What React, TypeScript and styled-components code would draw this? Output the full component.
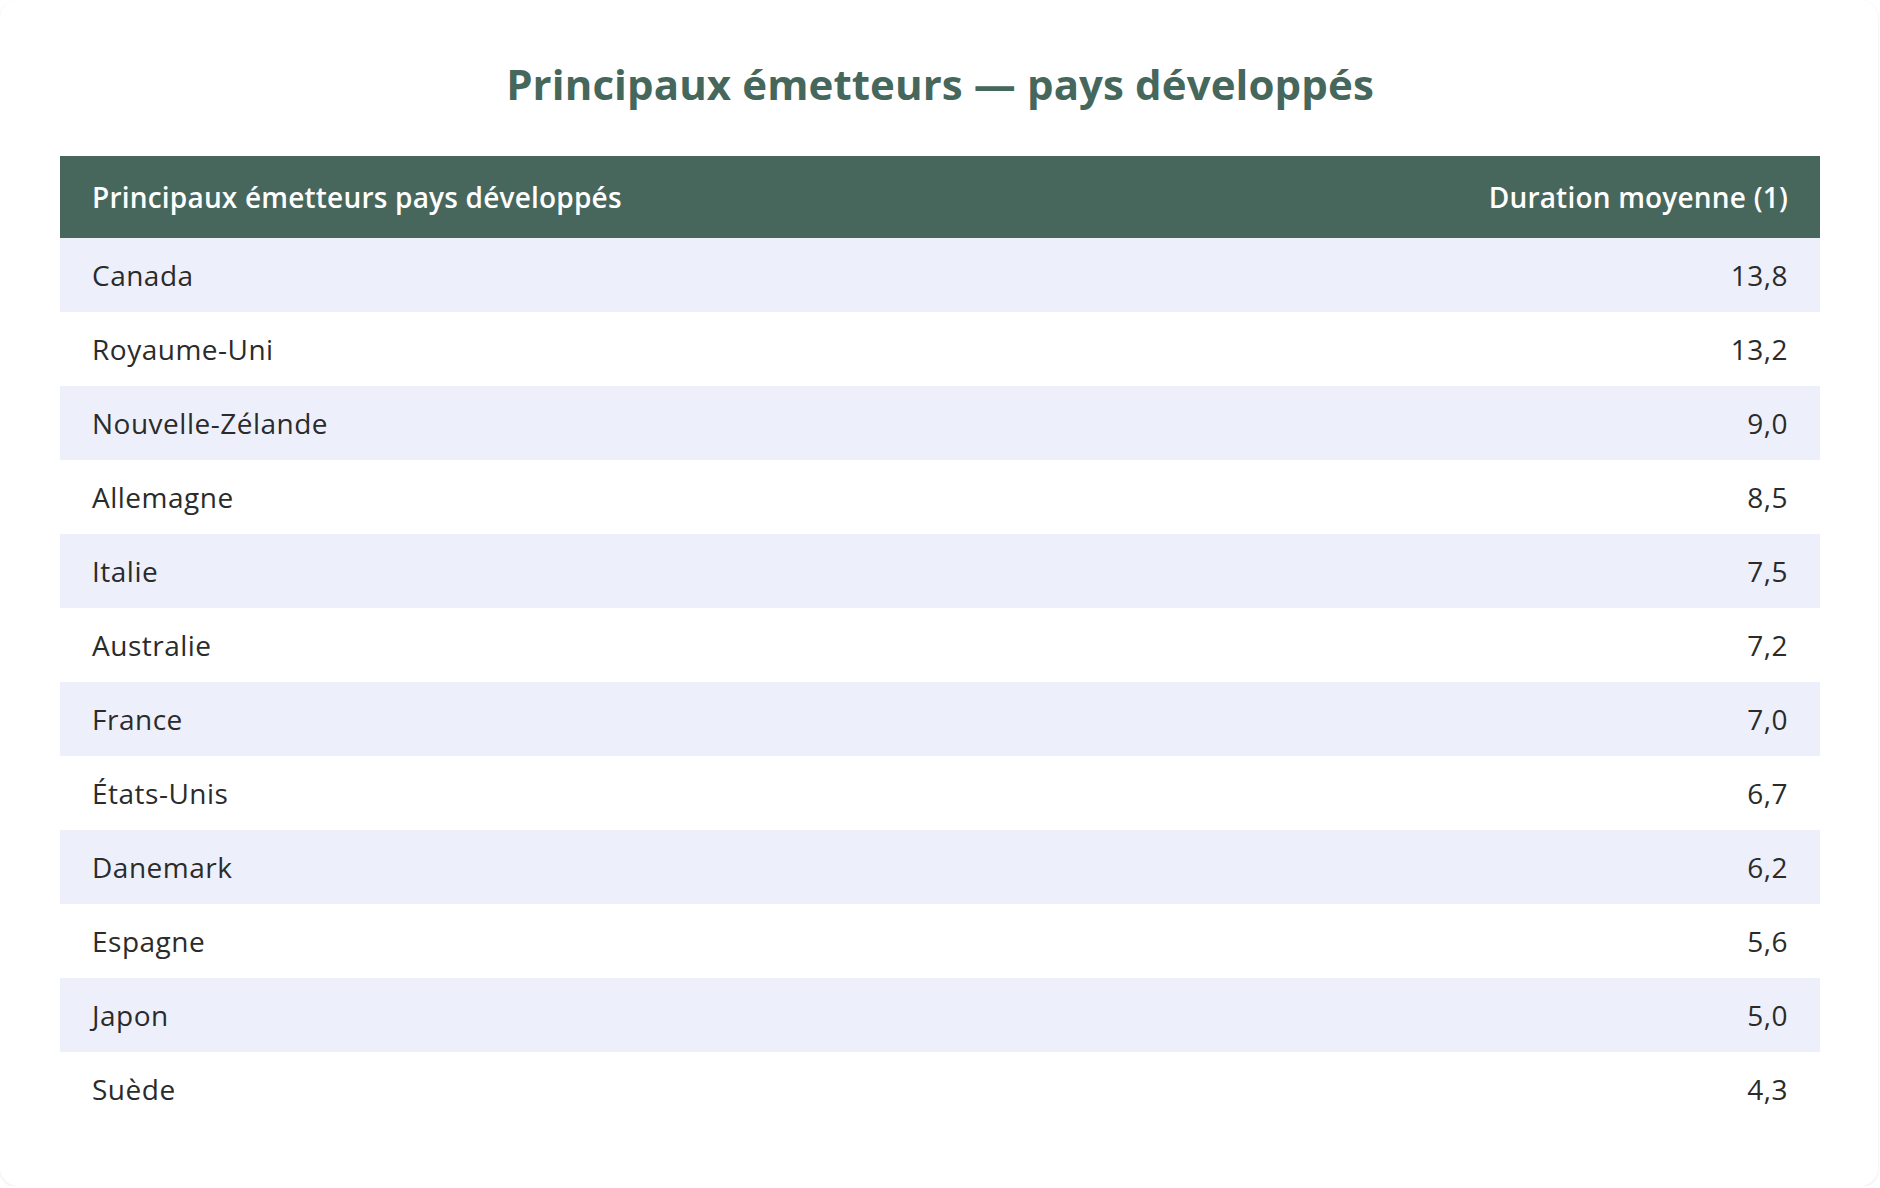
import React from "react";
import styled, { createGlobalStyle } from "styled-components";

const GlobalStyle = createGlobalStyle`
  html, body {
    margin: 0;
    padding: 0;
    background: #ffffff;
  }
  body {
    font-family: "Open Sans", "Noto Sans", "Liberation Sans", sans-serif;
  }
`;

const Card = styled.section`
  box-sizing: border-box;
  width: 1878px;
  min-height: 1186px;
  padding: 60px 58px 60px 60px;
  background: #fff;
  border-radius: 18px;
  box-shadow: 0 1px 3px rgba(0, 0, 0, 0.09);
`;

const Title = styled.h1`
  margin: 0 0 48px;
  text-align: center;
  font-size: 42px;
  line-height: 48px;
  font-weight: 700;
  letter-spacing: 0.1px;
  color: #46675c;
`;

const Table = styled.table`
  width: 100%;
  border-collapse: collapse;
`;

const HeadCell = styled.th<{ $align?: "left" | "right" }>`
  height: 82px;
  padding: 0 32px;
  background: #47675d;
  color: #fff;
  font-size: 28px;
  font-weight: 600;
  letter-spacing: 0.2px;
  text-align: ${(p) => p.$align || "left"};
`;

const Row = styled.tr<{ $striped: boolean }>`
  background: ${(p) => (p.$striped ? "#edf0fb" : "#fff")};
`;

const Cell = styled.td<{ $align?: "left" | "right" }>`
  height: 74px;
  padding: 0 32px;
  color: #2b2b2b;
  font-size: 28px;
  letter-spacing: 0.5px;
  text-align: ${(p) => p.$align || "left"};
`;

const data: [string, string][] = [
  ["Canada", "13,8"],
  ["Royaume-Uni", "13,2"],
  ["Nouvelle-Zélande", "9,0"],
  ["Allemagne", "8,5"],
  ["Italie", "7,5"],
  ["Australie", "7,2"],
  ["France", "7,0"],
  ["États-Unis", "6,7"],
  ["Danemark", "6,2"],
  ["Espagne", "5,6"],
  ["Japon", "5,0"],
  ["Suède", "4,3"],
];

export default function App() {
  return (
    <>
      <GlobalStyle />
      <Card>
        <Title>Principaux émetteurs — pays développés</Title>
        <Table>
          <thead>
            <tr>
              <HeadCell>Principaux émetteurs pays développés</HeadCell>
              <HeadCell $align="right">Duration moyenne (1)</HeadCell>
            </tr>
          </thead>
          <tbody>
            {data.map(([country, value], i) => (
              <Row key={country} $striped={i % 2 === 0}>
                <Cell>{country}</Cell>
                <Cell $align="right">{value}</Cell>
              </Row>
            ))}
          </tbody>
        </Table>
      </Card>
    </>
  );
}
